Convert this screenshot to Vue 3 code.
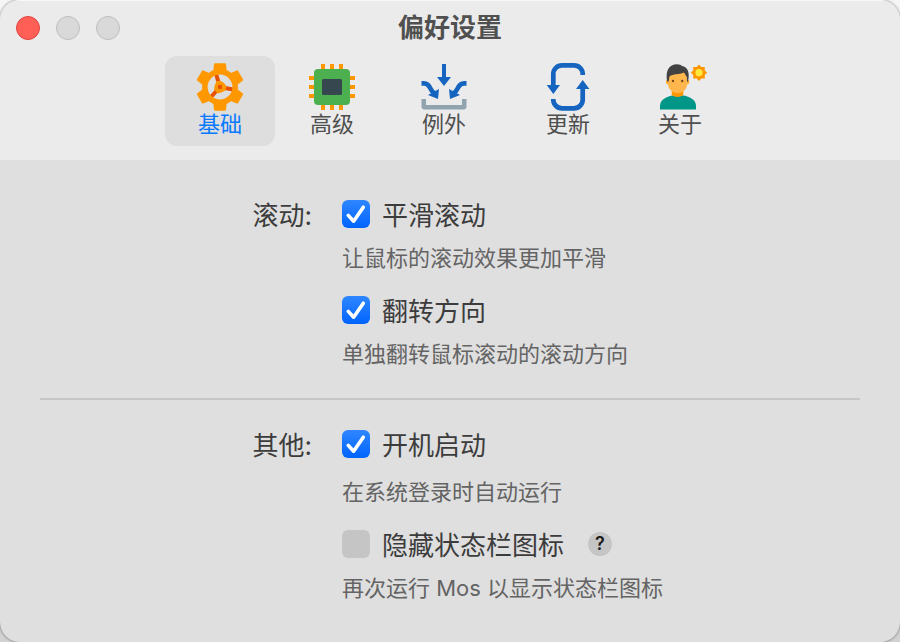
<script setup>
import { ref, reactive } from 'vue'

const active = ref('basic')
const tabs = [
  { id: 'basic', label: '基础' },
  { id: 'advanced', label: '高级' },
  { id: 'exceptions', label: '例外' },
  { id: 'update', label: '更新', spaced: true },
  { id: 'about', label: '关于' }
]

const toothAngles = [0, 60, 120, 180, 240, 300]

const sections = reactive([
  {
    title: '滚动:',
    options: [
      { id: 'smooth', label: '平滑滚动', hint: '让鼠标的滚动效果更加平滑', on: true },
      { id: 'reverse', label: '翻转方向', hint: '单独翻转鼠标滚动的滚动方向', on: true }
    ]
  },
  {
    title: '其他:',
    options: [
      { id: 'launch', label: '开机启动', hint: '在系统登录时自动运行', on: true, roomy: true },
      { id: 'hide', label: '隐藏状态栏图标', hint: '再次运行 Mos 以显示状态栏图标', on: false, help: true }
    ]
  }
])
</script>

<template>
  <div class="window">
    <header class="toolbar">
      <div class="titlebar">
        <div class="lights">
          <button type="button" class="light close" aria-label="关闭"></button>
          <button type="button" class="light" aria-label="最小化" disabled></button>
          <button type="button" class="light" aria-label="缩放" disabled></button>
        </div>
        <h1 class="title">偏好设置</h1>
      </div>
      <nav class="tabs">
        <button
          v-for="tab in tabs"
          :key="tab.id"
          type="button"
          class="tab"
          :class="{ active: active === tab.id, spaced: tab.spaced }"
          @click="active = tab.id"
        >
          <svg v-if="tab.id === 'basic'" class="icon" viewBox="0 0 48 48" aria-hidden="true">
            <g fill="none" stroke="#e65100" stroke-width="4">
              <path d="M24 24L20 11" />
              <path d="M24 24L37 26.5" />
              <path d="M24 24L15 34" />
            </g>
            <path fill="#ff9800" d="M20.5 18L25 18L30.500 23L29.500 27.500L22 30.500L18 26.500Z" />
            <circle cx="24" cy="24" r="5.5" fill="#ff9800" />
            <circle cx="24" cy="24" r="15.200" fill="none" stroke="#ff9800" stroke-width="5.600" />
            <g fill="#ff9800">
              <path
                v-for="angle in toothAngles"
                :key="angle"
                :transform="`rotate(${angle} 24 24)`"
                d="M17.200 9L18 1.300Q18.200.300 19.200.300H28.800Q29.800.300 30 1.300L30.800 9Z"
              />
            </g>
            <rect x="22" y="22" width="4" height="4" rx="1" fill="#e65100" />
          </svg>

          <svg v-else-if="tab.id === 'advanced'" class="icon" viewBox="0 0 48 48" aria-hidden="true">
            <path
              fill="#ff9800"
              d="M13 1h4v46h-4zM22 1h4v46h-4zM31 1h4v46h-4zM1 13h46v4H1zM1 22h46v4H1zM1 31h46v4H1z"
            />
            <rect x="6" y="6" width="36" height="36" rx="4" fill="#4caf50" />
            <rect x="14" y="16" width="20" height="16" rx="1.5" fill="#37474f" />
          </svg>

          <svg v-else-if="tab.id === 'exceptions'" class="icon" viewBox="0 0 48 48" aria-hidden="true">
            <path fill="#90a4ae" d="M1.5 36H6v6h36v-6h4.5v7.5a3 3 0 0 1-3 3h-39a3 3 0 0 1-3-3z" />
            <path fill="#1565c0" d="M22 1h4v13h5L24 23L17 14h5z" />
            <g fill="none" stroke="#1565c0" stroke-width="4.6">
              <path d="M1.5 20.4H4C11 20.4 9.5 28.5 15 30.5" />
              <path d="M46.5 20.4H44C37 20.4 38.500 28.5 33 30.5" />
            </g>
            <path fill="#1565c0" d="M19 26L18 36L8 32zM29 26L30 36L40 32z" />
          </svg>

          <svg v-else-if="tab.id === 'update'" class="icon" viewBox="0 0 48 48" aria-hidden="true">
            <g fill="none" stroke="#1565c0" stroke-width="4.7">
              <path d="M38.700 12V11A8.600 8.600 0 0 0 30.100 2.400H17.900A8.600 8.600 0 0 0 9.300 11V23" />
              <path d="M9.300 36V36.700A8.600 8.600 0 0 0 17.900 45.300H30.100A8.600 8.600 0 0 0 38.700 36.700V25" />
            </g>
            <path fill="#1565c0" d="M2.700 22H16L9.300 31zM32 26H45.400L38.700 17z" />
          </svg>

          <svg v-else class="icon" viewBox="0 0 48 48" aria-hidden="true">
            <path fill="#009688" d="M4 46.500V43C4 36 12 32 22 32S40 36 40 43V46.500z" />
            <path fill="#ff9800" d="M15.700 27H27.300V32Q21.500 36 15.700 32z" />
            <circle cx="12" cy="19" r="2.200" fill="#ffa726" />
            <circle cx="31.200" cy="19" r="2.200" fill="#ffa726" />
            <path fill="#ffb74d" d="M11.800 12C11.800 6 31.400 6 31.400 12V20C31.400 26 27 30 21.600 30S11.800 26 11.800 20z" />
            <path
              fill="#424242"
              d="M11 18C9.500 7 13 1.500 21 1.200C23.500 1.200 25 2 26 3C31.500 4 34 9 32.200 18L31 19V14.500L28 9.500C23 12 17 10.500 13.500 13.500L12.500 19z"
            />
            <circle cx="17" cy="18" r="1.200" fill="#784719" />
            <circle cx="26.200" cy="18" r="1.200" fill="#784719" />
            <path
              fill="#ff9800"
              d="M43 1.500L45.400 4L48.800 3.900L48.700 7.300L51.200 9.700L48.700 12.100L48.800 15.500L45.400 15.400L43 17.900L40.600 15.400L37.200 15.500L37.300 12.100L34.800 9.700L37.300 7.300L37.200 3.900L40.600 4z"
            />
            <circle cx="43" cy="9.700" r="3.600" fill="#ffeb3b" />
          </svg>
          <span class="tab-label">{{ tab.label }}</span>
        </button>
      </nav>
    </header>

    <main class="content">
      <section v-for="section in sections" :key="section.title" class="section">
        <h2 class="section-title">{{ section.title }}</h2>
        <div class="options">
          <div v-for="opt in section.options" :key="opt.id" class="option" :class="{ roomy: opt.roomy }">
            <div class="row">
              <span class="check">
                <input :id="opt.id" v-model="opt.on" type="checkbox" :aria-describedby="opt.id + '-hint'" />
                <svg v-if="opt.on" class="tick" viewBox="0 0 28 28" aria-hidden="true">
                  <path d="M6.300 15.400L11.600 21.200L21.300 7.200" />
                </svg>
              </span>
              <label class="label" :for="opt.id">{{ opt.label }}</label>
              <button v-if="opt.help" type="button" class="help">?</button>
            </div>
            <p :id="opt.id + '-hint'" class="hint">{{ opt.hint }}</p>
          </div>
        </div>
      </section>
    </main>
  </div>
</template>

<style>
body {
  margin: 0;
  background: linear-gradient(#f6f6f6, #d2d2d2);
}
</style>

<style scoped>
.window {
  display: flex;
  flex-direction: column;
  box-sizing: border-box;
  min-height: 100vh;
  overflow: hidden;
  border-radius: 20px;
  background: #dfdfdf;
  box-shadow: 0 0 3px rgba(0, 0, 0, 0.5);
  color: #3c3c3c;
  font-family: Inter, 'Noto Sans CJK SC', sans-serif;
}

button {
  margin: 0;
  padding: 0;
  border: 0;
  background: none;
  font: inherit;
  color: inherit;
}

.toolbar {
  padding-bottom: 14px;
  background: #ebebeb;
  box-shadow: inset 0 1px #f8f8f8;
}

.titlebar {
  display: grid;
  grid-template-columns: 1fr auto 1fr;
  align-items: center;
  height: 56px;
  padding: 0 16px;
}

.lights {
  display: flex;
  gap: 16px;
}

.light {
  box-sizing: border-box;
  width: 24px;
  height: 24px;
  border: 1px solid #bdbdbd;
  border-radius: 50%;
  background: #d9d9d9;
}

.light.close {
  border-color: #e2443f;
  background: #ff5f57;
}

.title {
  margin: 0;
  font-size: 26px;
  line-height: 56px;
  font-weight: 700;
  color: #505050;
}

.tabs {
  display: flex;
  justify-content: center;
  gap: 2px;
}

.tab {
  display: flex;
  flex-direction: column;
  align-items: center;
  box-sizing: border-box;
  width: 110px;
  height: 90px;
  padding-top: 7px;
  border-radius: 12px;
  color: #4f4f4f;
}

.tab.spaced {
  margin-left: 12px;
}

.tab.active {
  background: #dedede;
  color: #087aff;
}

.icon {
  display: block;
  width: 48px;
  height: 48px;
  overflow: visible;
}

.tab-label {
  font-size: 22px;
  line-height: 26px;
}

.content {
  padding: 0 40px 10px;
}

.section {
  display: grid;
  grid-template-columns: 272px 1fr;
  column-gap: 30px;
  padding: 40px 0 30px;
}

.section + .section {
  padding-top: 30px;
  border-top: 2px solid #c6c6c6;
}

.section-title {
  margin: 0;
  text-align: right;
  font-size: 26px;
  line-height: 32px;
  font-weight: 400;
}

.options {
  display: flex;
  flex-direction: column;
  gap: 24px;
}

.option {
  display: flex;
  flex-direction: column;
  gap: 16px;
}

.option.roomy {
  gap: 20px;
}

.row {
  display: flex;
  align-items: center;
  gap: 12px;
  height: 28px;
}

.label {
  padding-top: 4px;
  font-size: 26px;
  line-height: 28px;
}

.check {
  display: grid;
  flex: none;
}

.check input,
.tick {
  grid-area: 1 / 1;
  width: 28px;
  height: 28px;
}

.check input {
  appearance: none;
  margin: 0;
  border-radius: 6px;
  background: #c5c5c5;
}

.check input:checked {
  background: linear-gradient(#2f86ff, #0064ff);
}

.tick {
  pointer-events: none;
  fill: none;
  stroke: #fff;
  stroke-width: 3.6;
  stroke-linecap: round;
  stroke-linejoin: round;
}

.help {
  width: 24px;
  height: 24px;
  margin-left: 12px;
  border-radius: 50%;
  background: #c5c5c5;
  color: #1c1c1c;
  font-size: 18px;
  line-height: 24px;
  font-weight: 600;
}

.hint {
  margin: 0;
  font-size: 22px;
  line-height: 28px;
  color: #646464;
}
</style>
